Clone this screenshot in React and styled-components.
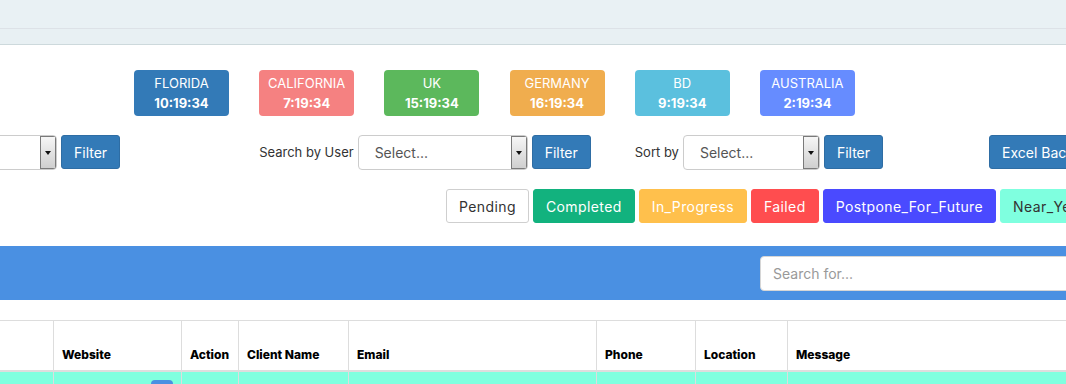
import React from "react";
import styled, { createGlobalStyle } from "styled-components";

const GlobalStyle = createGlobalStyle`
  body {
    margin: 0;
    background: #fff;
    font-family: "Inter", "Open Sans", sans-serif;
    color: #333;
    overflow: hidden;
  }
`;

const clocks = [
  { name: "FLORIDA", time: "10:19:34", color: "#337ab7" },
  { name: "CALIFORNIA", time: "7:19:34", color: "#f58181" },
  { name: "UK", time: "15:19:34", color: "#5cb85c" },
  { name: "GERMANY", time: "16:19:34", color: "#f0ad4e" },
  { name: "BD", time: "9:19:34", color: "#5bc0de" },
  { name: "AUSTRALIA", time: "2:19:34", color: "#668cff" },
];

const statuses = [
  { label: "Pending", bg: "#fff", fg: "#333", border: "#cfcfcf" },
  { label: "Completed", bg: "#12b27e", fg: "#fff" },
  { label: "In_Progress", bg: "#ffc04c", fg: "#fff" },
  { label: "Failed", bg: "#ff4d4f", fg: "#fff" },
  { label: "Postpone_For_Future", bg: "#4a4aff", fg: "#fff" },
  { label: "Near_Year_Task", bg: "#7fffdf", fg: "#333" },
];

const columns = [
  { title: "", width: 80 },
  { title: "Website", width: 128 },
  { title: "Action", width: 57 },
  { title: "Client Name", width: 110 },
  { title: "Email", width: 248 },
  { title: "Phone", width: 99 },
  { title: "Location", width: 92 },
  { title: "Message", width: 320 },
];

export default function App() {
  return (
    <>
      <GlobalStyle />
      <Page>
        <TopStrip />
        <SubStrip />

        <ClockRow>
          {clocks.map((c) => (
            <ClockBadge key={c.name} $bg={c.color}>
              <span>{c.name}</span>
              <strong>{c.time}</strong>
            </ClockBadge>
          ))}
        </ClockRow>

        <FilterRow>
          <FilterGroup $offset={-113}>
            <Select $width={170} />
            <FilterButton>Filter</FilterButton>
          </FilterGroup>
          <FilterGroup $offset={139}>
            <Label>Search by User</Label>
            <Select $width={170} placeholder="Select..." />
            <FilterButton>Filter</FilterButton>
          </FilterGroup>
          <FilterGroup $offset={44}>
            <Label>Sort by</Label>
            <Select $width={137} placeholder="Select..." />
            <FilterButton>Filter</FilterButton>
          </FilterGroup>
          <FilterGroup $offset={106}>
            <FilterButton>Excel Backup</FilterButton>
          </FilterGroup>
        </FilterRow>

        <StatusRow>
          {statuses.map((s) => (
            <StatusButton key={s.label} $bg={s.bg} $fg={s.fg} $border={s.border}>
              {s.label}
            </StatusButton>
          ))}
        </StatusRow>

        <SearchBar>
          <SearchInput placeholder="Search for..." />
        </SearchBar>

        <Table>
          <colgroup>
            {columns.map((c, i) => (
              <col key={i} style={{ width: c.width }} />
            ))}
          </colgroup>
          <thead>
            <tr>
              {columns.map((c, i) => (
                <Th key={i}>{c.title}</Th>
              ))}
            </tr>
          </thead>
          <tbody>
            <Row>
              {columns.map((c, i) => (
                <Td key={i}>{c.title === "Website" && <RowButton />}</Td>
              ))}
            </Row>
          </tbody>
        </Table>
      </Page>
    </>
  );
}

function Select({ $width, placeholder }) {
  return (
    <SelectBox $width={$width}>
      <SelectText>{placeholder}</SelectText>
      <SelectArrow />
    </SelectBox>
  );
}

const Page = styled.div`
  width: 1066px;
  height: 384px;
  overflow: hidden;
`;

const TopStrip = styled.div`
  height: 28px;
  background: #e9f1f4;
  border-bottom: 1px solid #dde2e7;
`;

const SubStrip = styled.div`
  height: 15px;
  background: #e8f0f3;
  border-bottom: 1px solid #cdd9dc;
`;

const ClockRow = styled.div`
  display: flex;
  gap: 30.2px;
  padding: 25px 0 0 134px;
`;

const ClockBadge = styled.div`
  width: 95px;
  height: 46px;
  box-sizing: border-box;
  border-radius: 4px;
  background: ${(p) => p.$bg};
  color: #fff;
  display: flex;
  flex-direction: column;
  align-items: center;
  justify-content: center;
  font-size: 13px;
  line-height: 20px;

  strong {
    font-weight: 700;
  }
`;

const FilterRow = styled.div`
  display: flex;
  align-items: center;
  height: 34px;
  margin-top: 19px;
  white-space: nowrap;
`;

const FilterGroup = styled.div`
  display: flex;
  align-items: center;
  gap: 4px;
  flex-shrink: 0;
  margin-left: ${(p) => p.$offset}px;
`;

const Label = styled.span`
  font-size: 13px;
  color: #333;
`;

const SelectBox = styled.div`
  width: ${(p) => p.$width}px;
  height: 35px;
  box-sizing: border-box;
  border: 1px solid #cccccc;
  border-radius: 4px;
  background: #fff;
  display: flex;
  align-items: stretch;
  overflow: hidden;
`;

const SelectText = styled.span`
  flex: 1;
  display: flex;
  align-items: center;
  padding-left: 16px;
  font-size: 14px;
  color: #555;
`;

const SelectArrow = styled.span`
  width: 16px;
  box-sizing: border-box;
  border: 1px solid #7a7a7a;
  background: linear-gradient(#f6f6f6, #cfcfcf);
  position: relative;

  &::after {
    content: "";
    position: absolute;
    left: 4px;
    top: 14px;
    border-left: 3.5px solid transparent;
    border-right: 3.5px solid transparent;
    border-top: 4px solid #111;
  }
`;

const FilterButton = styled.button`
  height: 34px;
  padding: 0 12px;
  border: 1px solid #2e6da4;
  border-radius: 3px;
  background: #337ab7;
  color: #fff;
  font-family: inherit;
  font-size: 14px;
  white-space: nowrap;
`;

const StatusRow = styled.div`
  display: flex;
  gap: 4px;
  padding-left: 446px;
  margin-top: 20px;
  white-space: nowrap;
`;

const StatusButton = styled.button`
  height: 34px;
  padding: 0 12px;
  flex-shrink: 0;
  border: 1px solid ${(p) => p.$border || p.$bg};
  border-radius: 3px;
  background: ${(p) => p.$bg};
  color: ${(p) => p.$fg};
  font-family: inherit;
  font-size: 14px;
  letter-spacing: 0.4px;
`;

const SearchBar = styled.div`
  margin-top: 23px;
  height: 54px;
  background: #4a90e2;
  display: flex;
  align-items: center;
  padding-left: 760px;
`;

const SearchInput = styled.input`
  flex-shrink: 0;
  width: 340px;
  height: 35px;
  box-sizing: border-box;
  border: 1px solid #d6d6d6;
  border-radius: 4px;
  padding: 0 12px;
  font-family: inherit;
  font-size: 14px;
  outline: none;

  &::placeholder {
    color: #999;
  }
`;

const Table = styled.table`
  margin-top: 20px;
  margin-left: -27px;
  border-collapse: collapse;
  table-layout: fixed;
  width: 1134px;
  border-top: 1px solid #dddddd;
`;

const Th = styled.th`
  height: 50px;
  box-sizing: border-box;
  padding: 0 8px 8px;
  vertical-align: bottom;
  text-align: left;
  font-size: 12px;
  font-weight: 800;
  color: #000;
  border-left: 1px solid #dddddd;
  border-bottom: 2px solid #dddddd;
  white-space: nowrap;
`;

const Row = styled.tr`
  background: #7fffdf;
`;

const Td = styled.td`
  height: 40px;
  padding: 8px 8px 0;
  vertical-align: top;
  border-left: 1px solid #dddddd;
`;

const RowButton = styled.span`
  display: block;
  margin-left: auto;
  width: 22px;
  height: 26px;
  border-radius: 4px;
  background: #4a90e2;
`;
